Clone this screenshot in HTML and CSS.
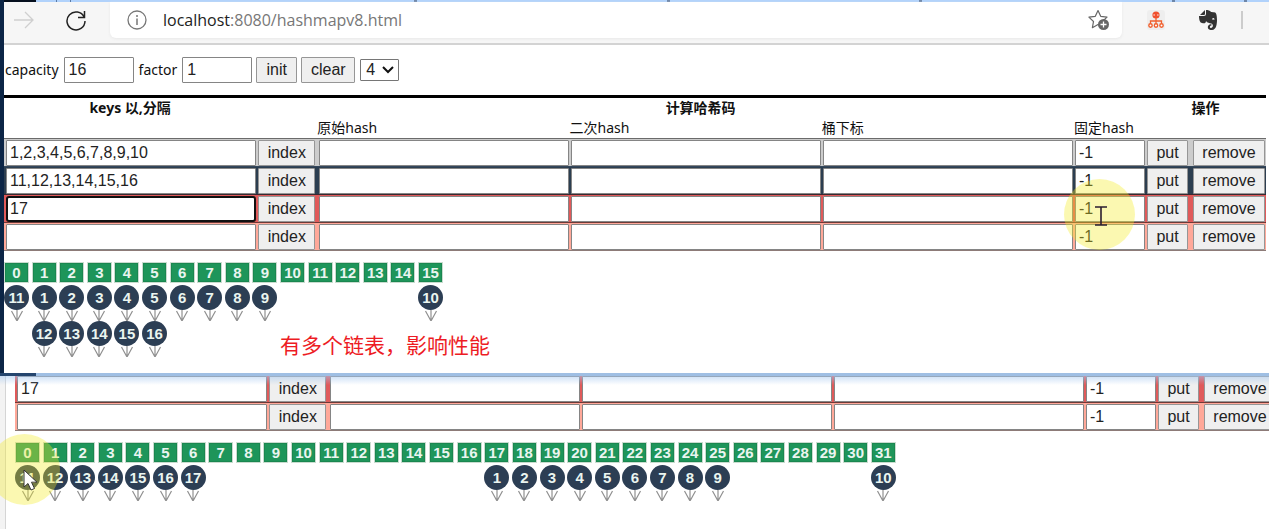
FILE: index.html
```html
<!DOCTYPE html>
<html lang="zh">
<head>
<meta charset="utf-8">
<title>hashmapv8</title>
<link rel="stylesheet" href="styles.css">
</head>
<body>
<main class="desktop">
  <section class="window">
    <div class="window-top"></div>
    <div class="browser-bar">
      <button class="nav" aria-label="Forward"><svg width="20" height="18" viewBox="0 0 20 18" fill="none" stroke="#cfcfcf" stroke-width="1.3"><path d="M0 9h18M11 1l8 8-8 8"/></svg></button>
      <button class="nav" aria-label="Reload"><svg width="22" height="22" viewBox="0 0 22 22" fill="none" stroke="#222" stroke-width="1.5"><path d="M19.2 8.2A9 9 0 1 0 20 12M19.5 2v6.5H13"/></svg></button>
      <div class="address">
        <svg width="20" height="20" viewBox="0 0 20 20" fill="none" stroke="#777" stroke-width="1.3"><circle cx="10" cy="10" r="9"/><path d="M10 8.5V15M10 5v2" stroke-width="1.5"/></svg>
        <span class="url"><b>localhost</b>:8080/hashmapv8.html</span>
        <button class="favorite" aria-label="Favorite"><svg width="22" height="22" viewBox="0 0 22 22"><path d="M10 1.5l2.7 5.8 6.3.8-4.6 4.4 1.1 6.2L10 15.6l-5.6 3.1 1.1-6.2L.9 8.1l6.4-.8z" fill="#fff" stroke="#666" stroke-width="1.2" stroke-linejoin="round"/><circle cx="15.5" cy="15.5" r="5.5" fill="#666"/><path d="M15.5 12.500v6M12.500 15.500h6" stroke="#fff" stroke-width="1.3"/></svg></button>
      </div>
      <div class="extensions">
        <svg width="18" height="20" viewBox="0 0 18 20"><rect width="18" height="20" rx="3" fill="#eee"/><circle cx="9" cy="5" r="3.600" fill="#f0502e"/><path d="M7.600 4l-1 1 1 1M10.400 4l1 1-1 1" fill="none" stroke="#fff" stroke-width=".7"/><path d="M9 8v6M3.500 14v-3h11v3" fill="none" stroke="#f0602e" stroke-width="1.3"/><g fill="#fff" stroke="#f0602e" stroke-width="1.4"><circle cx="3.500" cy="15.500" r="1.700"/><circle cx="9" cy="15.500" r="1.700"/><circle cx="14.500" cy="15.500" r="1.700"/></g></svg>
        <svg width="18" height="20" viewBox="0 0 18 20"><path d="M6 0L1 5h4q1 0 1-1zM7 0v4q0 2-2 2H0c0 4 1 7 3 7 2 .5 4 .6 4-2 1 2 4 2 5 2.500 3 .5 2 4.500 0 4.500-1.500 0-1.500-2.500.5-2.500v-1.300c-3 0-4 2-3.500 4Q9.500 20 13 20c4.500 0 5-7 5-10 0-3-.4-7-2-7.500-1-.5-3-.5-4-.6C11 .5 9 0 7 0zm6 9.500q.4-1.500 1.500-1.400 1 .2 1 1.700-1.200-.5-2.500-.3z" fill="#333"/></svg>
        <span class="separator"></span>
      </div>
    </div>
    <div class="page">
      <form class="toolbar">
        <label for="capacity">capacity</label><input id="capacity" class="box small" value="16">
        <label for="factor">factor</label><input id="factor" class="box small" value="1">
        <button type="button" class="btn init">init</button>
        <button type="button" class="btn clear">clear</button>
        <span class="picker"><select class="tree" aria-label="threshold"><option>4</option></select><svg width="12" height="8" viewBox="0 0 12 8" fill="none" stroke="#111" stroke-width="2"><path d="M1 1l5 5 5-5"/></svg></span>
      </form>
      <table class="ops main-table">
        <colgroup><col><col class="c-index"><col><col><col><col class="c-fixed"><col class="c-put"><col class="c-remove"></colgroup>
        <thead>
          <tr><th>keys 以,分隔</th><th colspan="5">计算哈希码</th><th colspan="2">操作</th></tr>
          <tr><td></td><td></td><td>原始hash</td><td>二次hash</td><td>桶下标</td><td>固定hash</td><td></td><td></td></tr>
        </thead>
        <tbody id="rows-main"></tbody>
      </table>
      <div class="map map-16" id="map-main"></div>
      <p class="note">有多个链表，影响性能</p>
      <div class="spot spot-text"><svg width="12" height="20" viewBox="0 0 12 20" fill="none" stroke="#2b1d30" stroke-width="1.6"><path d="M0 1h12M6 1v18M0 19h12"/></svg></div>
    </div>
    <div class="window-bottom"></div>
  </section>
  <section class="behind">
    <div class="behind-page">
      <table class="ops">
        <colgroup><col><col class="c-index"><col><col><col><col class="c-fixed"><col class="c-put"><col class="c-remove"></colgroup>
        <tbody id="rows-behind"></tbody>
      </table>
      <div class="map map-32" id="map-behind"></div>
    </div>
    <div class="spot spot-arrow"><svg width="15" height="22" viewBox="0 0 15 22"><path d="M1 1v17l4-3.500 3 6.500 3.500-1.500-3-6.300H14z" fill="#fff" stroke="#333" stroke-width="1"/></svg></div>
  </section>
</main>
<script src="app.js"></script>
</body>
</html>
```
FILE: styles.css
```css
* { box-sizing: border-box; }
body { margin: 0; background: #fff; color: #111; font: 14px/20px "Noto Sans", "Noto Sans CJK SC", sans-serif; }
button, input, select { margin: 0; font: 16px/20px "Liberation Sans", sans-serif; color: #222; }
.desktop { display: flex; flex-direction: column; min-height: 100vh; overflow: hidden; }

.window { position: relative; border-left: 4px solid #0c2546; background: #fff; }
.window-top { height: 2px; background: linear-gradient(90deg, #06101e 32px, transparent 32px), linear-gradient(90deg, #b1d2fb 52px, #5c7ba5 52px 53px, #b1d2fb 53px 66px, #5c7ba5 66px 67px, #b1d2fb 67px 410px, #6d86a8 410px 413px, #b1d2fb 413px 663px, #6d86a8 663px 666px, #b1d2fb 666px 915px, #6d86a8 915px 918px, #b1d2fb 918px 1168px, #6d86a8 1168px 1171px, #b1d2fb 1171px 1240px, #6d86a8 1240px 1243px, #b1d2fb 1243px); }
.browser-bar { display: flex; height: 43px; background: #f6f6f6; border-bottom: 2px solid #d3d3d3; }
.nav, .favorite { display: flex; align-items: center; justify-content: center; padding: 0; border: 0; background: none; }
.nav { width: 40px; height: 36px; }
.nav + .nav { margin: 0 14px 0 12px; }
.address { display: flex; flex: 1; align-items: center; gap: 16px; height: 36px; padding: 0 12px 0 17px; border-radius: 0 0 6px 6px; background: #fff; box-shadow: 0 1px 3px #e8e8e8; }
.url { flex: 1; font: 16px/20px "Open Sans", sans-serif; color: #777; }
.url b { font-weight: 400; color: #222; }
.extensions { display: flex; align-items: center; gap: 34px; height: 36px; padding: 0 26px 0 25px; }
.separator { width: 2px; height: 18px; margin-left: -10px; background: #ccc; }

.page { position: relative; padding: 12px 3px 15px 0; }
.toolbar { display: flex; align-items: center; height: 26px; margin-bottom: 12px; }
.toolbar label { padding: 0 5px 0 1px; }
.box { height: 26px; width: 100%; padding: 0 3px; border: 1px solid #858585; border-radius: 1px; background: #fff; outline: 0; display: block; }
.small { width: 70px; margin-right: 4px; padding: 0 4px; }
.btn { height: 26px; padding: 0; border: 1px solid #969696; border-radius: 1px; background: #efefef; display: block; text-align: center; }
.init { width: 41px; margin-right: 4px; }
.clear { width: 54px; margin-right: 5px; }
.picker { display: grid; align-items: center; }
.picker > * { grid-area: 1 / 1; }
.picker svg { justify-self: end; margin-right: 5px; pointer-events: none; }
.tree { width: 39px; height: 22px; padding: 0 5px; border: 1px solid #767676; border-radius: 1px; background: #fff; appearance: none; }

.ops { width: 100%; table-layout: fixed; border-spacing: 0; }
.main-table { border-top: 3px solid #000; }
.c-index { width: 61px; }
.c-fixed { width: 71px; }
.c-put { width: 45px; }
.c-remove { width: 76px; }
.ops th, .ops thead td { height: 20px; padding: 0; line-height: 20px; text-align: center; white-space: nowrap; }
.ops thead td { text-align: left; }
.ops tbody td { padding: 1px 0 0 2px; border-top: 1px solid #6b6b6b; }
.ops tbody td:nth-child(3) { padding-right: 1px; }
.ops tbody td:nth-child(4), .ops tbody td:nth-child(5) { padding: 1px 1px 0; }
.ops tbody td:nth-child(6) { padding-left: 1px; }
.ops tbody td:last-child { padding: 1px 1px 0 3px; }
.ops tbody tr:last-child td { border-bottom: 1px solid #8d7b78; }
.gray td { background: #ccc; }
.ops .navy td { background: #2c3e50; border-color: #34475c; }
.ops .red td { background: #e05a5a; border-color: #3a2930; }
.ops .salmon td { background: #ffa899; border-top-color: #6f3a38; }
.index { width: 57px; }
.put { width: 41px; }
.remove { width: 100%; }
.box.active { border: 2px solid #111; border-radius: 3px; padding: 0 2px; }

.map { display: grid; align-items: start; margin-top: 11px; font: bold 15px/20px "Liberation Sans", sans-serif; color: #eaf5f0; }
.map-16 { grid-template-columns: repeat(16, 1fr); width: 35%; }
.map-32 { grid-template-columns: repeat(32, 1fr); width: 70%; }
.bucket { display: flex; flex-direction: column; align-items: center; width: 25px; }
.slot { width: 25px; height: 21px; margin-bottom: 2px; border: 1px solid #c9dccf; background: #1e955a; box-shadow: inset 0 0 0 1px #1a8750; line-height: 19px; text-align: center; }
.node { display: flex; flex-direction: column; align-items: center; }
.value { width: 25px; height: 25px; border-radius: 50%; background: #2c3e54; line-height: 25px; text-align: center; }
.link { display: block; width: 14px; height: 11px; }
.map-16 { margin-bottom: 1px; }

.note { position: absolute; left: 276px; top: 284px; margin: 0; font: 21px/30px "Noto Sans CJK SC", sans-serif; color: #ed1c24; }
.spot { position: absolute; display: flex; border-radius: 50%; background: rgba(244, 236, 40, .36); pointer-events: none; }
.spot-text { left: 1060px; top: 134px; width: 71px; height: 71px; padding: 27px 0 0 31px; }
.window-bottom { height: 3px; margin-left: -4px; background: linear-gradient(90deg, #24456e 36px, #9fbfe4 36px); }

.behind { position: relative; display: flex; flex: 1; padding-left: 5px; background: #f3f3f3; overflow: hidden; }
.behind::before { content: ""; position: absolute; inset: 0 0 auto; height: 9px; background: linear-gradient(rgba(165, 200, 240, .55), transparent); z-index: 1; }
.behind-page { flex: 1; margin-right: -8px; padding-left: 9px; border-left: 1px solid #d5d5d5; background: #fff; }
.behind .ops { margin-top: -2px; }
.spot-arrow { left: -11px; top: 58px; width: 71px; height: 71px; padding: 35px 0 0 34px; }
```
FILE: app.js
```js
const rowHtml = ({ tone, keys, active }, n, prefix) => `
  <tr class="${tone}">
    <td><input class="box${active ? " active" : ""}" aria-label="${prefix} keys ${n}" value="${keys}"></td>
    <td><button type="button" class="btn index">index</button></td>
    <td><input class="box" aria-label="${prefix} hash ${n}"></td>
    <td><input class="box" aria-label="${prefix} rehash ${n}"></td>
    <td><input class="box" aria-label="${prefix} bucket ${n}"></td>
    <td><input class="box" aria-label="${prefix} fixed ${n}" value="-1"></td>
    <td><button type="button" class="btn put">put</button></td>
    <td><button type="button" class="btn remove">remove</button></td>
  </tr>`;

const nodeHtml = value => `
  <div class="node"><span class="value">${value}</span>
  <svg class="link" viewBox="0 0 14 11" fill="none" stroke="#909090" stroke-width="1.2"><path d="M7 0v11M1.500 1l5.500 10 5.500-10"/></svg></div>`;

function drawMap(id, size, chains) {
  let html = "";
  for (let i = 0; i < size; i++) {
    html += `<div class="bucket"><span class="slot">${i}</span>${(chains[i] || []).map(nodeHtml).join("")}</div>`;
  }
  document.getElementById(id).innerHTML = html;
}

function drawRows(id, rows) {
  document.getElementById(id).innerHTML = rows.map((row, n) => rowHtml(row, n + 1, id)).join("");
}

drawRows("rows-main", [
  { tone: "gray", keys: "1,2,3,4,5,6,7,8,9,10" },
  { tone: "navy", keys: "11,12,13,14,15,16" },
  { tone: "red", keys: "17", active: true },
  { tone: "salmon", keys: "" }
]);
drawRows("rows-behind", [
  { tone: "red", keys: "17" },
  { tone: "salmon", keys: "" }
]);
drawMap("map-main", 16, {
  0: [11], 1: [1, 12], 2: [2, 13], 3: [3, 14], 4: [4, 15], 5: [5, 16],
  6: [6], 7: [7], 8: [8], 9: [9], 15: [10]
});
drawMap("map-behind", 32, {
  0: [11], 1: [12], 2: [13], 3: [14], 4: [15], 5: [16], 6: [17],
  17: [1], 18: [2], 19: [3], 20: [4], 21: [5], 22: [6], 23: [7], 24: [8], 25: [9], 31: [10]
});

const activeInput = document.querySelector(".active");
activeInput.focus();
activeInput.setSelectionRange(2, 2);
```
